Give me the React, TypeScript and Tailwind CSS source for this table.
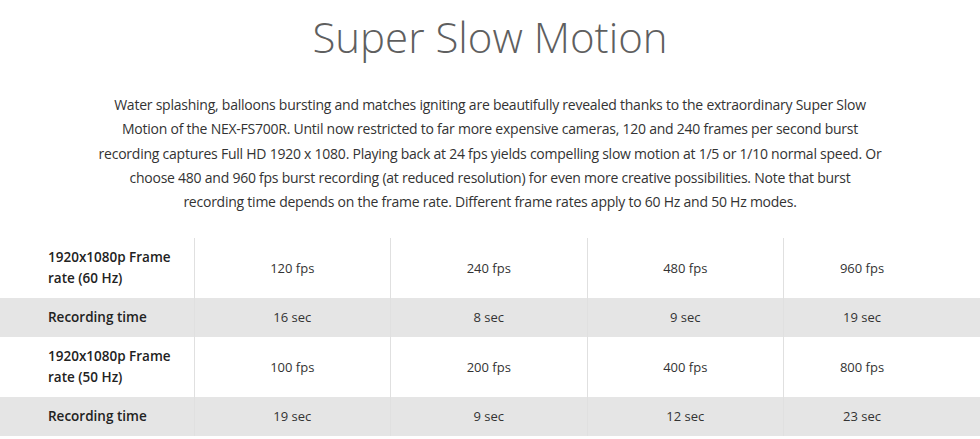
const rows = [
  { label: ['1920x1080p Frame', 'rate (60 Hz)'], values: ['120 fps', '240 fps', '480 fps', '960 fps'], shaded: false },
  { label: ['Recording time'], values: ['16 sec', '8 sec', '9 sec', '19 sec'], shaded: true },
  { label: ['1920x1080p Frame', 'rate (50 Hz)'], values: ['100 fps', '200 fps', '400 fps', '800 fps'], shaded: false },
  { label: ['Recording time'], values: ['19 sec', '9 sec', '12 sec', '23 sec'], shaded: true },
];

const lines = [
  'Water splashing, balloons bursting and matches igniting are beautifully revealed thanks to the extraordinary Super Slow',
  'Motion of the NEX-FS700R. Until now restricted to far more expensive cameras, 120 and 240 frames per second burst',
  'recording captures Full HD 1920 x 1080. Playing back at 24 fps yields compelling slow motion at 1/5 or 1/10 normal speed. Or',
  'choose 480 and 960 fps burst recording (at reduced resolution) for even more creative possibilities. Note that burst',
  'recording time depends on the frame rate. Different frame rates apply to 60 Hz and 50 Hz modes.',
];

export default function App() {
  return (
    <div className="w-[980px] bg-white font-['Open_Sans',sans-serif] text-[#333]">
      <h1 className="pt-[8px] text-center text-[42px] leading-[58px] font-light text-[#5f5f5f]">
        Super Slow Motion
      </h1>
      <p className="mx-auto mt-[27px] w-[800px] text-center text-[14px] leading-[24.3px] tracking-[-0.24px]">
        {lines.map((l, i) => (
          <span key={i} className="block whitespace-nowrap">
            {l}
          </span>
        ))}
      </p>
      <table className="mt-[24px] w-full table-fixed border-collapse text-[13px]">
        <colgroup>
          <col className="w-[194px]" />
          <col />
          <col />
          <col />
          <col />
        </colgroup>
        <tbody>
          {rows.map((row, i) => (
            <tr key={i} className={row.shaded ? 'h-[39px] bg-[#e5e5e5]' : 'h-[60px] bg-white'}>
              <td className="pl-[48px] text-[13.5px] font-semibold leading-[21px] text-[#222]">
                {row.label.map((l) => (
                  <div key={l}>{l}</div>
                ))}
              </td>
              {row.values.map((v, j) => (
                <td
                  key={v}
                  className={
                    j === 3
                      ? 'border-l border-[#e0e0e0] pr-[40px] text-center'
                      : 'border-l border-[#e0e0e0] text-center'
                  }
                >
                  {v}
                </td>
              ))}
            </tr>
          ))}
        </tbody>
      </table>
    </div>
  );
}
